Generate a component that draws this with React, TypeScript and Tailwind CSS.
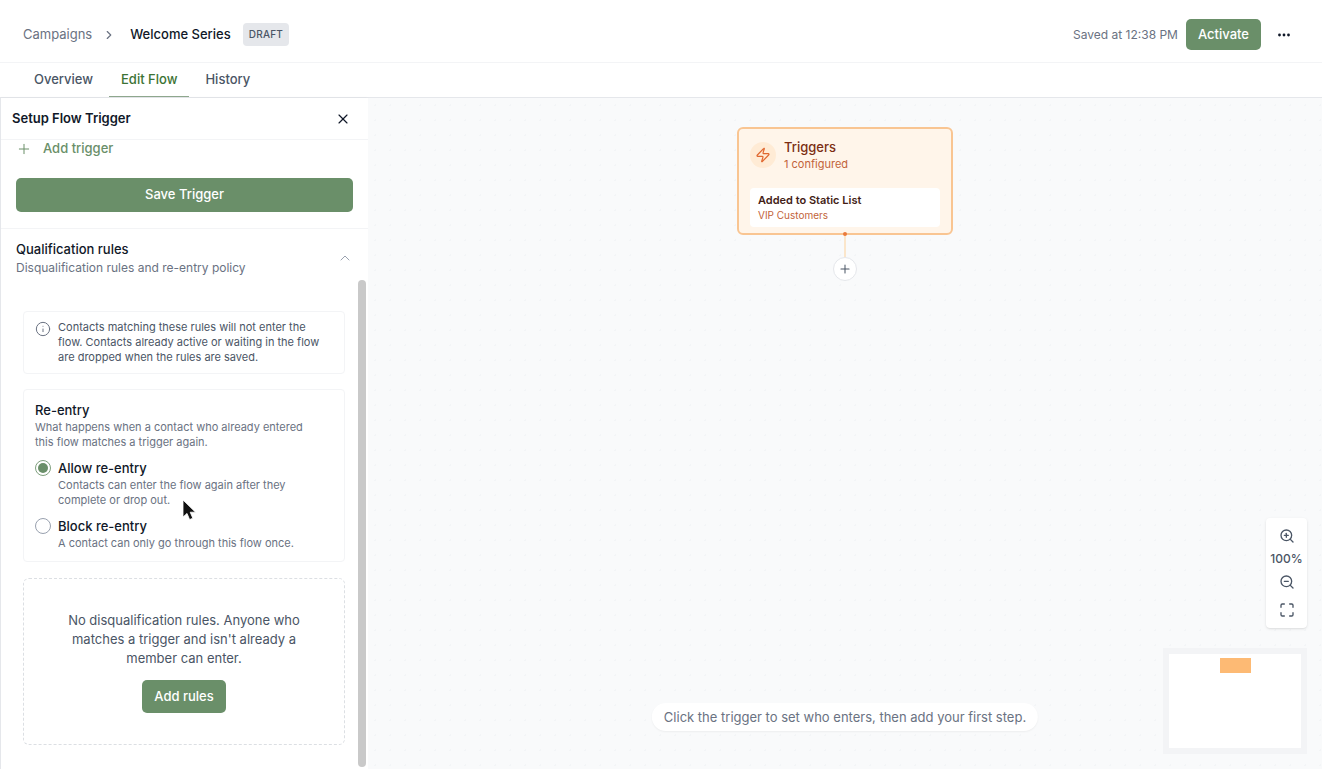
import type { ReactNode } from "react";
import { ChevronRight, ChevronUp, Info, Maximize, Plus, X, Zap, ZoomIn, ZoomOut } from "lucide-react";

const tabs = [
  { label: "Overview", active: false },
  { label: "Edit Flow", active: true },
  { label: "History", active: false },
];

function Header() {
  return (
    <header className="flex h-[63px] shrink-0 items-center justify-between border-b border-gray-100 pt-[7px] pr-[31px] pl-[23px]">
      <nav className="flex items-center text-[13px]" aria-label="Breadcrumb">
        <a href="#campaigns" className="text-gray-500">
          Campaigns
        </a>
        <ChevronRight className="mr-3.5 ml-2.5 size-3.5 text-gray-500" />
        <span className="font-medium text-gray-900">Welcome Series</span>
        <span className="ml-3 rounded bg-gray-200 px-1.5 py-1 text-[10px] leading-[15px] font-medium tracking-wide text-gray-600">
          DRAFT
        </span>
      </nav>
      <div className="flex items-center">
        <span className="text-[12px] text-gray-500">Saved at 12:38 PM</span>
        <button className="ml-2 h-[31px] rounded-[5px] bg-[#6a8f69] px-3 text-[13px] font-medium text-white">
          Activate
        </button>
        <button className="ml-4 text-gray-900" aria-label="More actions">
          <svg viewBox="0 0 14 14" className="size-3.5" fill="currentColor">
            <circle cx="2.5" cy="7" r="1.4" />
            <circle cx="7" cy="7" r="1.4" />
            <circle cx="11.5" cy="7" r="1.4" />
          </svg>
        </button>
      </div>
    </header>
  );
}

function Tabs() {
  return (
    <nav
      className="flex h-[35px] shrink-0 gap-1 border-b border-gray-200 pl-[22px] text-[13px] font-medium"
      aria-label="Campaign"
    >
      {tabs.map((tab) => (
        <a
          key={tab.label}
          href={`#${tab.label}`}
          className={
            tab.active
              ? "flex items-center border-b border-[#8fa88e] px-3 text-[#3c7335]"
              : "flex items-center border-b border-transparent px-3 text-gray-600"
          }
        >
          {tab.label}
        </a>
      ))}
    </nav>
  );
}

type OptionProps = {
  id: string;
  label: string;
  defaultChecked?: boolean;
  children: ReactNode;
};

function Option({ id, label, defaultChecked, children }: OptionProps) {
  return (
    <div className="mt-2 flex gap-[7px]">
      <input
        id={id}
        type="radio"
        name="reentry"
        defaultChecked={defaultChecked}
        className="mt-0.5 size-4 shrink-0 appearance-none rounded-full border border-gray-400 bg-clip-content p-[2px] checked:border-[#7fa07e] checked:bg-[#6a8f69]"
      />
      <div>
        <label htmlFor={id} className="block text-[13px] leading-5 font-medium text-gray-900">
          {label}
        </label>
        <p className="text-[11px] leading-[15px] text-gray-500">{children}</p>
      </div>
    </div>
  );
}

function Cursor() {
  return (
    <svg viewBox="0 0 14 22" className="absolute top-1.5 left-full ml-3 h-[22px] w-3.5">
      <path d="M1 1v17l4-3.600 2.600 6.200 3.200-1.400-2.600-6h5.300z" fill="#111" stroke="#fff" strokeWidth="0.800" />
    </svg>
  );
}

function SetupPanel() {
  return (
    <aside className="flex w-[368px] shrink-0 flex-col border-l border-gray-200 bg-white shadow-sm">
      <div className="flex h-[42px] shrink-0 items-center justify-between border-b border-gray-100 pr-[17px] pl-[11px]">
        <h2 className="text-[13px] font-semibold text-gray-900">Setup Flow Trigger</h2>
        <button aria-label="Close panel" className="text-gray-900">
          <X className="size-4" strokeWidth={1.75} />
        </button>
      </div>

      <div className="shrink-0 border-b border-gray-100 px-[15px] pb-4">
        <button className="flex h-[18px] items-center gap-[11px] text-[13px] font-medium text-[#6a8f69]">
          <Plus className="size-4" strokeWidth={1.5} />
          Add trigger
        </button>
        <button className="mt-5 h-[34px] w-full rounded-[5px] bg-[#6a8f69] text-[13px] font-medium text-white">
          Save Trigger
        </button>
      </div>

      <button className="flex shrink-0 items-center justify-between px-[15px] pt-[10px] text-left" aria-expanded="true">
        <span>
          <span className="block text-[13px] leading-5 font-medium text-gray-900">Qualification rules</span>
          <span className="block text-[12px] leading-[18px] text-gray-500">Disqualification rules and re-entry policy</span>
        </span>
        <ChevronUp className="size-4 text-gray-400" strokeWidth={1.5} />
      </button>

      <div className="flex min-h-0 flex-1 pt-[3px] pr-0.5 pb-0.5">
        <div className="min-w-0 flex-1 pt-[31px] pr-[13px] pl-[22px]">
          <div className="flex gap-[7px] rounded border border-gray-100 px-[11px] py-2">
            <Info className="mt-px size-4 shrink-0 text-gray-500" strokeWidth={1.5} />
            <p className="text-[11px] leading-[15px] text-gray-600">
              Contacts matching these rules will not enter the
              <br />
              flow. Contacts already active or waiting in the flow
              <br />
              are dropped when the rules are saved.
            </p>
          </div>

          <section className="mt-[15px] rounded border border-gray-100 px-[11px] py-2.5">
            <h3 className="text-[13px] leading-5 font-medium text-gray-900">Re-entry</h3>
            <p className="text-[11px] leading-[15px] text-gray-500">
              What happens when a contact who already entered
              <br />
              this flow matches a trigger again.
            </p>
            <Option id="allow" label="Allow re-entry" defaultChecked>
              Contacts can enter the flow again after they
              <br />
              <span className="relative">
                complete or drop out.
                <Cursor />
              </span>
            </Option>
            <Option id="block" label="Block re-entry">
              A contact can only go through this flow once.
            </Option>
          </section>

          <section className="mt-4 flex flex-col items-center rounded-md border border-dashed border-[#dcdfe3] pt-8 pb-[31px] text-center">
            <p className="text-[13px] leading-[19px] text-gray-600">
              No disqualification rules. Anyone who
              <br />
              matches a trigger and isn't already a
              <br />
              member can enter.
            </p>
            <button className="mt-3 h-[33px] rounded-[5px] bg-[#6a8f69] px-3 text-[13px] font-medium text-white">
              Add rules
            </button>
          </section>
        </div>
        <div className="w-2 shrink-0 rounded-full bg-[#c9c9c9]" />
      </div>
    </aside>
  );
}

function TriggerNode() {
  return (
    <div className="absolute top-[29px] left-1/2 flex -translate-x-1/2 flex-col items-center">
      <div className="relative w-[216px] rounded-md border-2 border-[#f9c592] bg-[#fff5ea] px-[11px] pt-[9px] pb-1.5">
        <div className="flex items-center gap-2">
          <span className="flex size-[26px] items-center justify-center rounded-full bg-[#ffebd5] text-[#e0662e]">
            <Zap className="size-4" strokeWidth={1.75} />
          </span>
          <div>
            <h3 className="text-[13px] leading-[18px] font-medium text-[#7c2d12]">Triggers</h3>
            <p className="text-[11px] leading-4 text-[#c2633a]">1 configured</p>
          </div>
        </div>
        <div className="mt-4 rounded-sm bg-white px-2 py-1">
          <p className="text-[11px] leading-4 font-semibold text-[#431d16]">Added to Static List</p>
          <p className="text-[10px] leading-[15px] text-[#c2633a]">VIP Customers</p>
        </div>
        <span className="absolute -bottom-[3px] left-1/2 size-1 -translate-x-1/2 rounded-full bg-[#ea7a3c]" />
      </div>
      <span className="h-[22px] w-0.5 bg-[#fbe6cb]" />
      <button
        className="flex size-6 items-center justify-center rounded-full border border-gray-200 bg-white text-gray-600"
        aria-label="Add step"
      >
        <Plus className="size-3.5" strokeWidth={1.75} />
      </button>
    </div>
  );
}

function Canvas() {
  return (
    <main className="relative min-w-0 flex-1 bg-[#f9fafb] bg-[radial-gradient(#f3f5f7_1px,transparent_1px)] bg-[size:15px_15px]">
      <TriggerNode />

      <p className="absolute bottom-[38px] left-1/2 -translate-x-1/2 rounded-full bg-white px-3 py-1 text-[13px] leading-5 whitespace-nowrap text-gray-500 shadow-xs">
        Click the trigger to set who enters, then add your first step.
      </p>

      <div className="absolute right-[15px] bottom-[15px] flex flex-col items-end gap-5">
        <div className="flex w-[41px] flex-col items-center rounded bg-white pt-2.5 pb-2.5 text-gray-600 shadow-sm">
          <button aria-label="Zoom in">
            <ZoomIn className="size-4" />
          </button>
          <span className="mt-[7px] text-[12px] leading-4 font-medium">100%</span>
          <button aria-label="Zoom out" className="mt-[7px]">
            <ZoomOut className="size-4" />
          </button>
          <button aria-label="Fit view" className="mt-3">
            <Maximize className="size-4" />
          </button>
        </div>
        <div className="h-[106px] w-[144px] border-[6px] border-[#f3f4f6] bg-white pt-1">
          <div className="mx-auto h-[15px] w-[31px] bg-[#fdba74]" />
        </div>
      </div>
    </main>
  );
}

export default function App() {
  return (
    <div className="flex h-screen flex-col overflow-hidden bg-white font-[Inter,sans-serif]">
      <Header />
      <Tabs />
      <div className="flex min-h-0 flex-1">
        <SetupPanel />
        <Canvas />
      </div>
    </div>
  );
}
